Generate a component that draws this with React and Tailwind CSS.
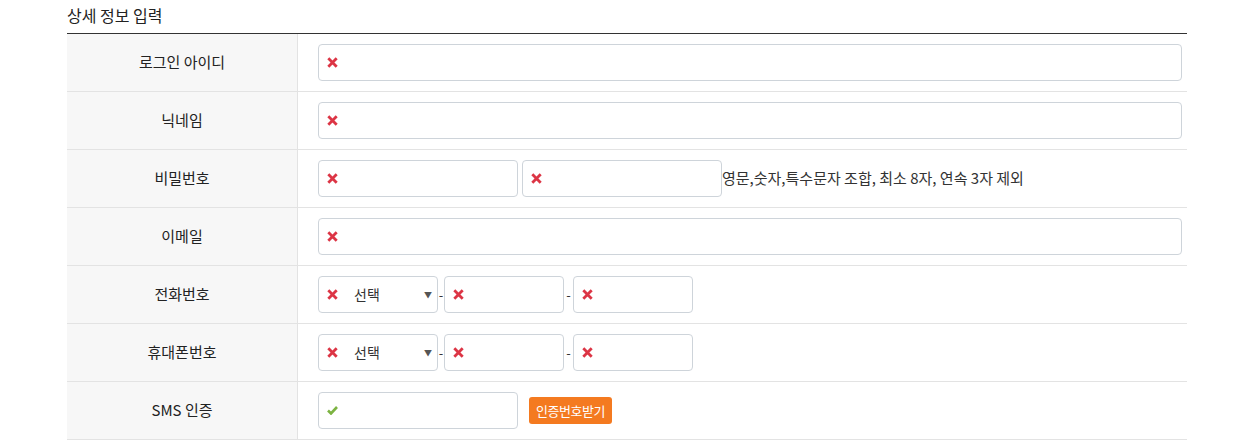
import React from "react";

const font = { fontFamily: '"Noto Sans CJK KR", "Noto Sans", sans-serif' };

function XIcon() {
  return (
    <svg width="11" height="11" viewBox="0 0 11 11" className="shrink-0">
      <path d="M1.3 1.3 L9.7 9.7 M9.7 1.3 L1.3 9.7" stroke="#dc3545" strokeWidth="2.8" strokeLinecap="butt" />
    </svg>
  );
}

function Check() {
  return (
    <svg width="11" height="9" viewBox="0 0 11 9" className="shrink-0">
      <path d="M1 4.5 L4 7.5 L10 1" stroke="#7cb342" strokeWidth="2.6" fill="none" />
    </svg>
  );
}

function Input({ w = "w-full", icon = <XIcon /> }) {
  return (
    <div className={`${w} h-[37px] border border-[#ced4da] rounded-[4px] bg-white flex items-center pl-[8px]`}>
      {icon}
    </div>
  );
}

function Select() {
  return (
    <div className="w-[120px] h-[37px] border border-[#ced4da] rounded-[4px] bg-white flex items-center pl-[8px] pr-[5px]">
      <XIcon />
      <span className="ml-[16px] text-[14px] text-[#333] flex-1">선택</span>
      <span className="text-[8px] text-[#555]">▼</span>
    </div>
  );
}

function Row({ label, children }) {
  return (
    <div className="flex h-[58px] border-b border-[#e3e3e3]">
      <div className="w-[231px] shrink-0 bg-[#f7f7f7] border-r border-[#e3e3e3] flex items-center justify-center text-[15px] text-[#222]">
        {label}
      </div>
      <div className="flex-1 flex items-center pl-[20px] pr-[5px]">{children}</div>
    </div>
  );
}

function Phone() {
  return (
    <div className="flex items-center">
      <Select />
      <span className="w-[6px] text-center text-[13px] text-[#333]">-</span>
      <Input w="w-[120px]" />
      <span className="w-[9px] text-center text-[13px] text-[#333]">-</span>
      <Input w="w-[120px]" />
    </div>
  );
}

export default function App() {
  return (
    <div className="w-[1250px] h-[448px] bg-white overflow-hidden" style={font}>
      <div className="ml-[67px] w-[1120px]">
        <div className="h-[33px] pt-[3px] text-[16px] text-[#222] leading-[24px]">상세 정보 입력</div>
        <div className="border-t border-[#333]">
          <Row label="로그인 아이디">
            <Input />
          </Row>
          <Row label="닉네임">
            <Input />
          </Row>
          <Row label="비밀번호">
            <div className="flex items-center gap-[4px]">
              <Input w="w-[200px]" />
              <Input w="w-[200px]" />
            </div>
            <span className="text-[15px] text-[#333]">영문,숫자,특수문자 조합, 최소 8자, 연속 3자 제외</span>
          </Row>
          <Row label="이메일">
            <Input />
          </Row>
          <Row label="전화번호">
            <Phone />
          </Row>
          <Row label="휴대폰번호">
            <Phone />
          </Row>
          <Row label="SMS 인증">
            <Input w="w-[200px]" icon={<Check />} />
            <button className="ml-[11px] h-[27px] w-[83px] rounded-[3px] bg-[#f47a20] text-white text-[13px] tracking-[-0.5px]">인증번호받기</button>
          </Row>
        </div>
      </div>
    </div>
  );
}
